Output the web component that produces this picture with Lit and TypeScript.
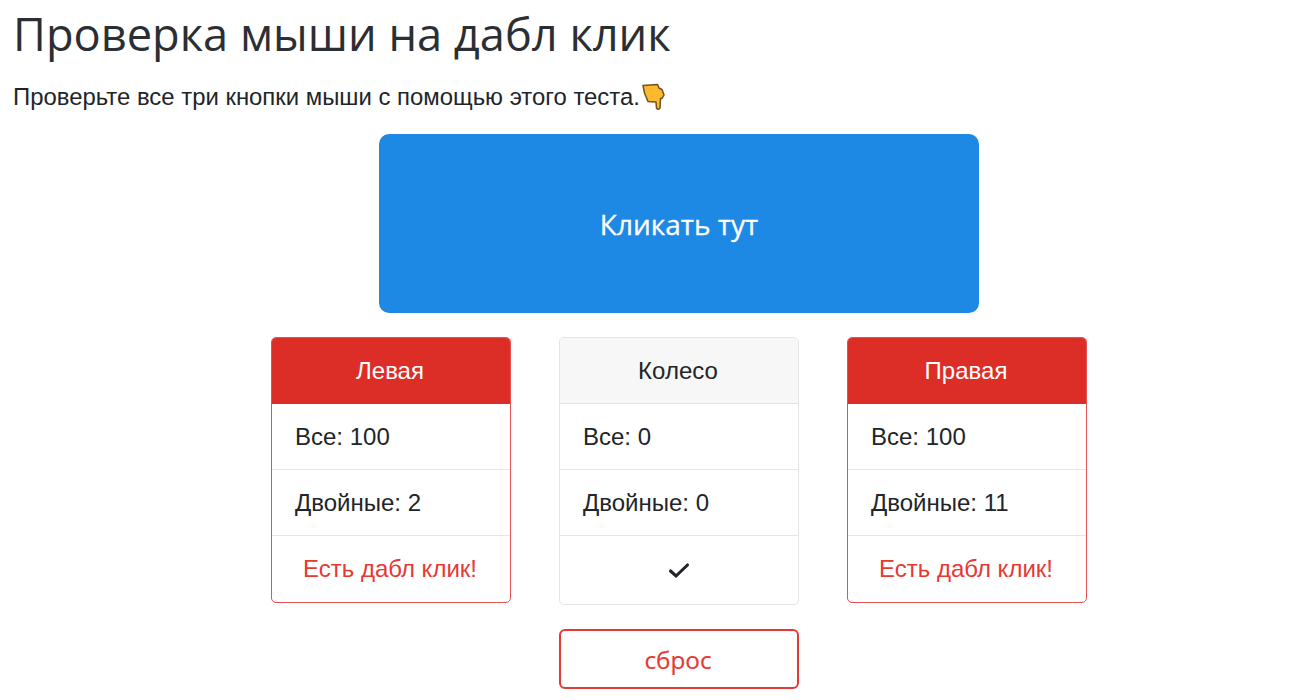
import { LitElement, html, css, svg } from "lit";
import { customElement } from "lit/decorators.js";

const check = html`<svg class="check" width="22" height="18" viewBox="0 0 22 18" aria-hidden="true"><path d="M2.5 10 L8 15 L19.5 4" fill="none" stroke="#212529" stroke-width="3.1" stroke-linecap="round" stroke-linejoin="miter"/></svg>`;

const hand = svg`<svg class="hand" width="24" height="28" viewBox="0 0 24 28" aria-hidden="true"><path d="M2 2.5 L16.5 1.5 L18 5 L21 6.5 L23 12 L21 15.5 L19.5 15.5 L19 25 Q17 27.5 15.5 25 L15 19 L7 18.5 L3.5 10 Z" fill="#fdb92e" stroke="#6e5220" stroke-width="1.5" stroke-linejoin="round"/></svg>`;

interface Col { title: string; all: number; dbl: number; bad: boolean }
const cols: Col[] = [
  { title: "Левая", all: 100, dbl: 2, bad: true },
  { title: "Колесо", all: 0, dbl: 0, bad: false },
  { title: "Правая", all: 100, dbl: 11, bad: true },
];

@customElement("app-root")
export class AppRoot extends LitElement {
  static styles = css`
    :host { display: block; background: #fff; color: #212529; font-family: "Liberation Sans", Arial, sans-serif; height: 700px; overflow: hidden; }
    .intro { padding: 0 13px; }
    h1 { margin: 0; padding-top: 7px; font: 400 45.2px/54px "Open Sans", sans-serif; color: #2b2f33; }
    .lead { margin: 22px 0 0; height: 28px; font-size: 23.9px; line-height: 28px; display: flex; align-items: center; }
    .hand { margin-left: 1px; }
    .main { padding-left: 56px; display: flex; flex-direction: column; align-items: center; margin-top: 23px; }
    .target { width: 600px; height: 179px; border: 0; border-radius: 10px; background: #1e88e5; color: #fff; font: 400 28px "Open Sans", sans-serif; padding: 0; -webkit-text-stroke: 0.3px #fff; }
    .cards { display: flex; gap: 48px; margin-top: 24px; align-items: flex-start; }
    .card { width: 240px; border: 1px solid #e4e4e4; border-radius: 5px; overflow: hidden; font-size: 24px; box-sizing: border-box; }
    .card.bad { border-color: #e35350; }
    .head { height: 66px; padding-right: 2px; display: flex; align-items: center; justify-content: center; background: #f7f7f7; border-bottom: 1px solid #e4e4e4; box-sizing: border-box; }
    .bad .head { background: #dc2d27; color: #fff; border-bottom: 0; }
    .row { height: 66px; display: flex; align-items: center; padding-left: 23px; border-bottom: 1px solid #e6e6e6; box-sizing: border-box; }
    .row.last { border-bottom: 0; justify-content: center; padding: 0 2px 0 0; }
    .card:not(.bad) .row.last { height: 68px; padding: 0; }
    .warn { color: #e53935; }
    .reset { display: block; width: 240px; height: 60px; margin-top: 24px; box-sizing: border-box; background: #fff; border: 2px solid #e53935; border-radius: 6px; color: #e53935; font: 400 24.3px "Open Sans", sans-serif; padding: 0 2px 0 0; -webkit-text-stroke: 0.2px #e53935; }
  `;

  render() {
    return html`
      <div class="intro">
        <h1>Проверка мыши на дабл клик</h1>
        <p class="lead">Проверьте все три кнопки мыши с помощью этого теста.${hand}</p>
      </div>
      <div class="main">
        <button class="target">Кликать тут</button>
        <div class="cards">
          ${cols.map(
            (c) => html`<div class="card ${c.bad ? "bad" : ""}">
              <div class="head">${c.title}</div>
              <div class="row">Все: ${c.all}</div>
              <div class="row">Двойные: ${c.dbl}</div>
              <div class="row last">${c.bad ? html`<span class="warn">Есть дабл клик!</span>` : check}</div>
            </div>`
          )}
        </div>
        <button class="reset">сброс</button>
      </div>
    `;
  }
}
